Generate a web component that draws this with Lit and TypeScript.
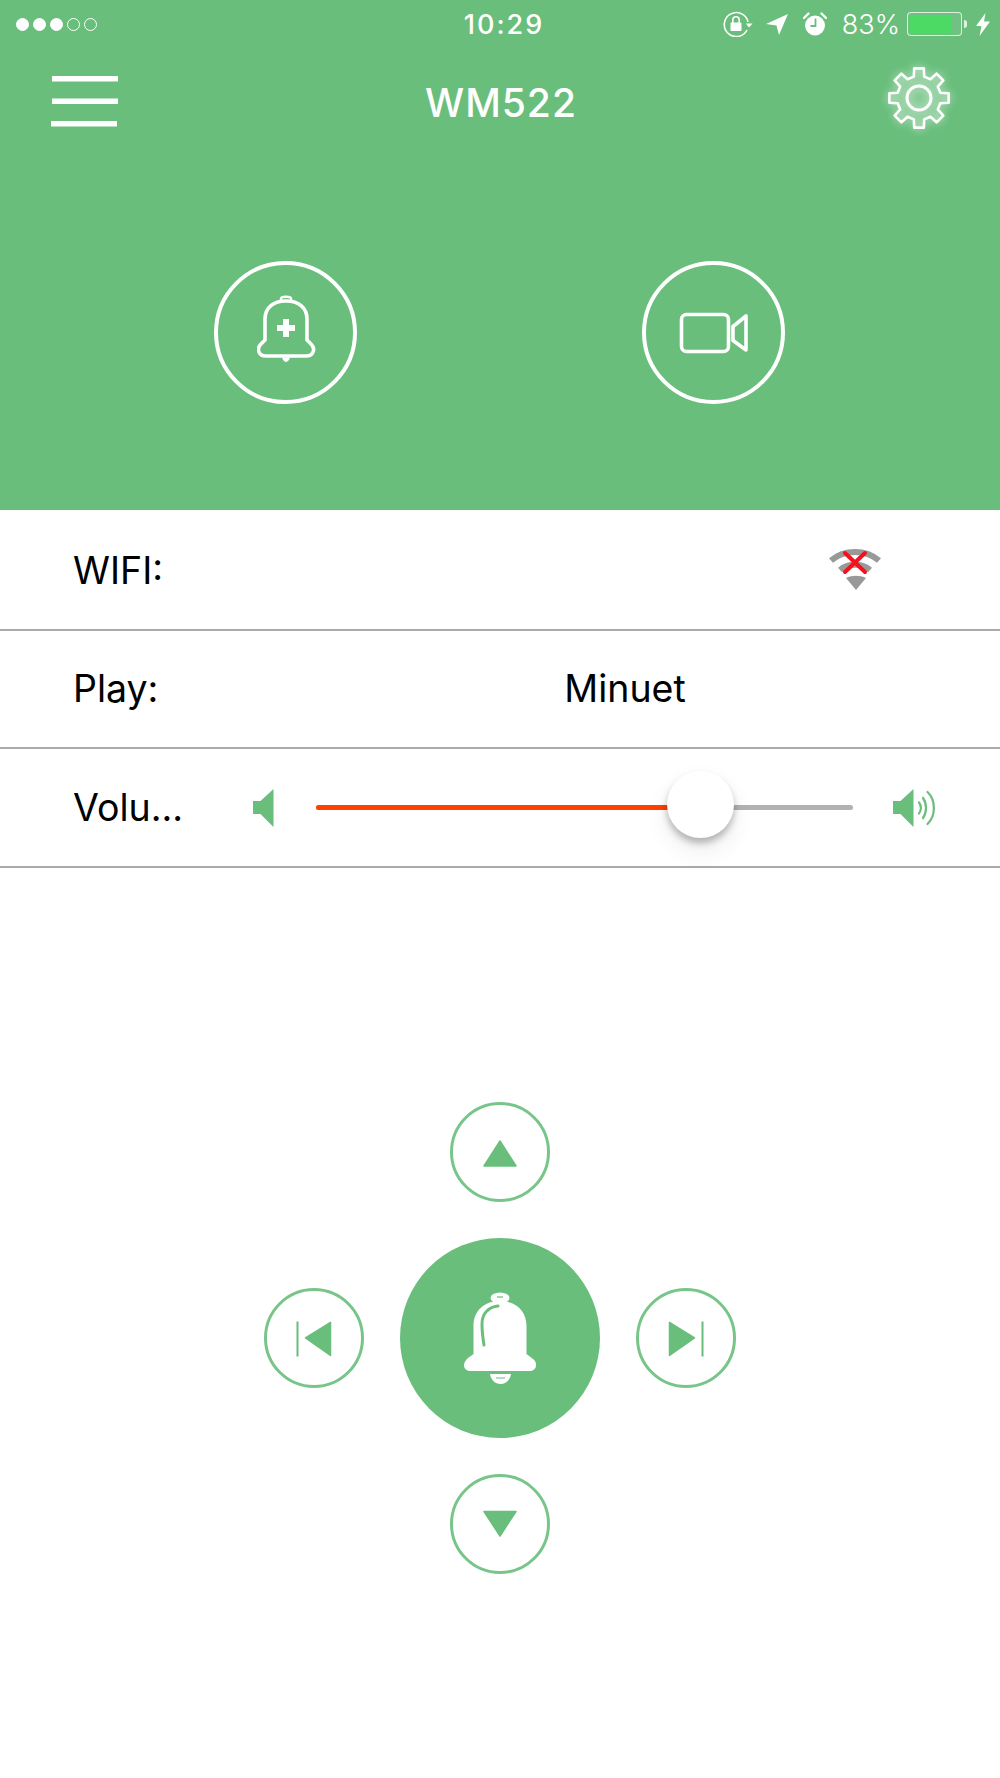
import { LitElement, html, css, svg } from "lit";
import { customElement, state } from "lit/decorators.js";

function gearPath(cx: number, cy: number, R: number, r: number, n: number): string {
  const pts: string[] = [];
  for (let i = 0; i < n; i++) {
    const a = (i * 2 * Math.PI) / n - Math.PI / 2;
    const p = (rad: number, d: number) =>
      `${(cx + rad * Math.cos(a + d)).toFixed(2)} ${(cy + rad * Math.sin(a + d)).toFixed(2)}`;
    pts.push(`${i === 0 ? "M" : "L"}${p(r, -0.24)}`);
    pts.push(`L${p(R, -0.16)}`);
    pts.push(`L${p(R, 0.16)}`);
    pts.push(`L${p(r, 0.24)}`);
  }
  return pts.join(" ") + " Z";
}

@customElement("app-root")
export class AppRoot extends LitElement {
  @state() volume = 0.715;

  static styles = css`
    :host {
      display: block;
      min-height: 1778px;
      background: #fff;
      font-family: "Inter", "Liberation Sans", sans-serif;
      color: #000;
    }
    svg { display: block; }
    .head {
      height: 510px;
      background: #69be7c;
      color: #fff;
      display: flex;
      flex-direction: column;
    }
    .status {
      height: 50px;
      display: grid;
      grid-template-columns: 1fr auto 1fr;
      align-items: center;
      padding: 0 10px 2px 16px;
      box-sizing: border-box;
    }
    .dots { display: flex; gap: 4px; }
    .dot {
      width: 13px;
      height: 13px;
      border-radius: 50%;
      box-sizing: border-box;
      border: 1px solid #fff;
    }
    .dot.on { background: #fff; }
    .time {
      font-size: 27px;
      font-weight: 500;
      letter-spacing: 2px;
      margin-left: 2px;
    }
    .sys { display: flex; align-items: center; justify-content: flex-end; }
    .pct { font-size: 27px; font-weight: 300; margin: 0 7px 0 15px; }
    .batt {
      width: 55px;
      height: 24px;
      box-sizing: border-box;
      border: 1.5px solid rgba(255, 255, 255, 0.75);
      border-radius: 4px;
      padding: 1.5px;
      display: flex;
      background: rgba(255, 255, 255, 0.06);
    }
    .batt i { display: block; width: 83%; background: #4cd964; border-radius: 1px; }
    .nub {
      width: 3px;
      height: 8px;
      background: #fff;
      opacity: 0.8;
      border-radius: 0 3px 3px 0;
      margin: 0 9px 0 2px;
    }
    .nav {
      height: 104px;
      display: flex;
      align-items: center;
      justify-content: space-between;
      padding: 0 48px 0 51px;
    }
    .title { font-size: 39px; font-weight: 500; letter-spacing: 1px; margin-right: 3px; }
    .gear { filter: drop-shadow(0 0 4px rgba(255, 255, 255, 0.7)); margin-bottom: 8px; }
    .hero {
      display: flex;
      justify-content: center;
      gap: 285px;
      margin-top: 107px;
      padding-right: 1px;
    }
    .hero-btn {
      width: 143px;
      height: 143px;
      box-sizing: border-box;
      border: 4px solid #fff;
      border-radius: 50%;
      display: flex;
      align-items: center;
      justify-content: center;
    }
    .bell-plus { margin: 0 0 8px 2px; }
    .rows { padding-top: 2px; }
    .row {
      height: 118.67px;
      box-sizing: border-box;
      border-bottom: 2px solid #aaa;
      display: flex;
      align-items: center;
      padding-left: 73px;
      font-size: 37.5px;
    }
    .row .lbl { width: 180px; flex: none; }
    .wifi-row { justify-content: space-between; padding-right: 118px; }
    .wifi-icon { margin-bottom: 3px; }
    .play-value { flex: none; width: 744px; text-align: center; }
    .track {
      position: relative;
      flex: none;
      width: 537px;
      height: 5px;
      margin: 0 40px 0 42px;
      border-radius: 3px;
      background: #b2b2b2;
    }
    .fill {
      height: 100%;
      background: #ff4000;
      border-radius: 3px 0 0 3px;
    }
    .thumb {
      position: absolute;
      top: -34px;
      width: 67px;
      height: 67px;
      margin-left: -33px;
      border-radius: 50%;
      background: #fff;
      box-shadow: 0 5px 7px rgba(0, 0, 0, 0.26), 0 12px 24px rgba(0, 0, 0, 0.08);
    }
    .pad {
      display: grid;
      grid-template-columns: 100px 200px 100px;
      grid-template-rows: 100px 200px 100px;
      gap: 36px;
      justify-content: center;
      margin-top: 234px;
    }
    .c {
      box-sizing: border-box;
      width: 100px;
      height: 100px;
      border: 3px solid #78c58a;
      border-radius: 50%;
      align-self: center;
      justify-self: center;
    }
    .up { grid-column: 2; grid-row: 1; }
    .prev { grid-column: 1; grid-row: 2; }
    .main {
      grid-column: 2;
      grid-row: 2;
      width: 200px;
      height: 200px;
      border-radius: 50%;
      background: #69be7c;
      display: flex;
      align-items: center;
      justify-content: center;
    }
    .next { grid-column: 3; grid-row: 2; }
    .down { grid-column: 2; grid-row: 3; }
    .c svg { width: 94px; height: 94px; }
    .main svg { position: relative; top: 1px; }
    .spk { flex: none; }
  `;

  private glyph(body: unknown) {
    return html`<svg viewBox="3 3 94 94" fill="#69be7c" stroke="#69be7c" stroke-width="1.5" stroke-linejoin="round">${body}</svg>`;
  }

  render() {
    const pct = (this.volume * 100).toFixed(1) + "%";
    return html`
      <div class="head">
        <div class="status">
          <div class="dots">
            <span class="dot on"></span><span class="dot on"></span><span class="dot on"></span>
            <span class="dot"></span><span class="dot"></span>
          </div>
          <div class="time">10:29</div>
          <div class="sys">
            <svg width="30" height="26" viewBox="0 0 30 26" style="margin-right:13px">
              <path d="M24 19 A12 12 0 1 1 25 11" fill="none" stroke="#fff" stroke-width="1.6"/>
              <path d="M23 12.5 H29.5 L26 16.5 Z" fill="#fff"/>
              <rect x="7.5" y="11.5" width="11" height="8.5" rx="1" fill="#fff"/>
              <path d="M9.8 12 V9 A3.2 3.2 0 0 1 16.2 9 V12" fill="none" stroke="#fff" stroke-width="1.6"/>
            </svg>
            <svg width="22" height="21" viewBox="0 0 22 21" style="margin-right:15px">
              <path d="M22 0 L13 21 L10.5 11.5 L0 10 Z" fill="#fff"/>
            </svg>
            <svg width="24" height="24" viewBox="0 0 24 24">
              <circle cx="12" cy="13.5" r="10" fill="#fff"/>
              <path d="M12.5 6.5 V14 H7.5" fill="none" stroke="#69be7c" stroke-width="1.8"/>
              <path d="M1 6 L5.5 1.5 M23 6 L18.5 1.5" stroke="#fff" stroke-width="2.4" stroke-linecap="round"/>
            </svg>
            <span class="pct">83%</span>
            <div class="batt"><i></i></div>
            <span class="nub"></span>
            <svg width="14" height="23" viewBox="0 0 14 23">
              <path d="M9.5 0 L0 13 H5.5 L3.5 23 L14 8.5 H8 Z" fill="#fff"/>
            </svg>
          </div>
        </div>
        <div class="nav">
          <svg width="68" height="52" viewBox="0 0 68 52" fill="#fff">
            <rect x="1" y="0" width="66" height="5.5"/>
            <rect x="1" y="22.500" width="66" height="5.500"/>
            <rect x="0" y="45" width="66" height="5.500"/>
          </svg>
          <div class="title">WM522</div>
          <svg class="gear" width="66" height="66" viewBox="0 0 66 66">
            <path d=${gearPath(33, 33, 30, 22, 8)} fill="rgba(255,255,255,0.12)" stroke="#fff" stroke-width="2.6" stroke-linejoin="round"/>
            <circle cx="33" cy="33" r="12" fill="none" stroke="#fff" stroke-width="3"/>
          </svg>
        </div>
        <div class="hero">
          <div class="hero-btn">
            <svg class="bell-plus" width="60" height="68" viewBox="0 0 60 68" fill="none" stroke="#fff" stroke-width="3.600" stroke-linejoin="round">
              <path d="M8 45 V24 C8 13 16 6 29 6 C42 6 50 13 50 24 V45 L54 49 C57 52 57 55 56 57 C55 60 52 61 49 61 H9 C6 61 3 60 2 57 C1 55 1 52 4 49 Z"/>
              <path d="M24 5.500 V3.500 C24 1 34 1 34 3.500 V5.500" stroke-width="2.500"/>
              <path d="M25 62.500 C26 66 28 67 29 67 C30 67 32 66 33 62.500 Z" fill="#fff" stroke="none"/>
              <path d="M26 24 H32 V30 H38 V36 H32 V42 H26 V36 H20 V30 H26 Z" fill="#fff" stroke="none"/>
            </svg>
          </div>
          <div class="hero-btn">
            <svg width="70" height="42" viewBox="0 0 70 42" fill="none" stroke="#fff" stroke-width="3.600" stroke-linejoin="round">
              <rect x="2.500" y="2.500" width="47" height="37" rx="5"/>
              <path d="M54 14.500 L67 4 V38 L54 28.500 Z"/>
            </svg>
          </div>
        </div>
      </div>

      <div class="rows">
        <div class="row wifi-row">
          <span>WIFI:</span>
          <svg class="wifi-icon" width="54" height="44" viewBox="0 0 54 44" fill="none">
            <path d="M3 13.500 C16 2 38 2 51 13.500" stroke="#999" stroke-width="6"/>
            <path d="M12 23 C20 16 34 16 42 23" stroke="#999" stroke-width="6"/>
            <path d="M18 31 C24 28 32 28 38 31 L28 43 Z" fill="#999"/>
            <path d="M17 6 L37 25 M37 6 L17 25" stroke="#f5101c" stroke-width="4" stroke-linecap="round"/>
          </svg>
        </div>
        <div class="row">
          <span class="lbl">Play:</span>
          <span class="play-value">Minuet</span>
        </div>
        <div class="row">
          <span class="lbl">Volu...</span>
          ${this.speaker(false)}
          <div class="track">
            <div class="fill" style="width:${pct}"></div>
            <div class="thumb" style="left:${pct}"></div>
          </div>
          ${this.speaker(true)}
        </div>
      </div>

      <div class="pad">
        <div class="c up">${this.glyph(svg`<path d="M34 64 H66 L50 39 Z"/>`)}</div>
        <div class="c prev">${this.glyph(svg`
          <rect x="32.500" y="33.500" width="2" height="35" stroke="none"/>
          <path d="M41.500 50 L66.500 34.500 V67.500 Z"/>`)}</div>
        <div class="main">
          <svg width="72" height="93" viewBox="0 0 72 93" fill="#fff">
            <ellipse cx="36" cy="6" rx="9.500" ry="5.500"/>
            <path d="M9.500 62 V34 C9.500 19 20 9 36 9 C52 9 62.500 19 62.500 34 V62 L69 67 C72 69 72 72 72 73 C72 77 69 79 65 79 H7 C3 79 0 77 0 73 C0 70 2 68 4 66 Z"/>
            <path d="M34 14 C24 15 18 22 18 32 C18 40 19 47 20 53" fill="none" stroke="#69be7c" stroke-width="3" stroke-linecap="round"/>
            <path d="M26 82 H47 C46 88 42 92 36.500 92 C31 92 27 88 26 82 Z"/>
            <path d="M32 86 H41" stroke="#69be7c" stroke-width="1"/>
            <path d="M33 5 H39" stroke="#69be7c" stroke-width="1.200"/>
          </svg>
        </div>
        <div class="c next">${this.glyph(svg`
          <path d="M33.500 34.500 V67.500 L58.500 50 Z"/>
          <rect x="65.500" y="33.500" width="2" height="35" stroke="none"/>`)}</div>
        <div class="c down">${this.glyph(svg`<path d="M34 37.500 H66 L50 62 Z"/>`)}</div>
      </div>
    `;
  }

  private speaker(loud: boolean) {
    return html`<svg class="spk" width=${loud ? 46 : 21} height="38" viewBox="0 0 ${loud ? 46 : 21} 38" fill="#69be7c">
      <path d="M0 12 H7.500 L20.500 0 V38 L7.500 25 H0 Z"/>
      ${loud
        ? svg`<g fill="none" stroke="#69be7c" stroke-width="2.200" stroke-linecap="round">
            <path d="M26 13.500 C28.500 16.500 28.500 21.500 26 24.500"/>
            <path d="M30 9 C34 14.500 34 23.500 30 29"/>
            <path d="M34.500 3 C43 11 43 27 34.500 35"/>
          </g>`
        : ""}
    </svg>`;
  }
}
